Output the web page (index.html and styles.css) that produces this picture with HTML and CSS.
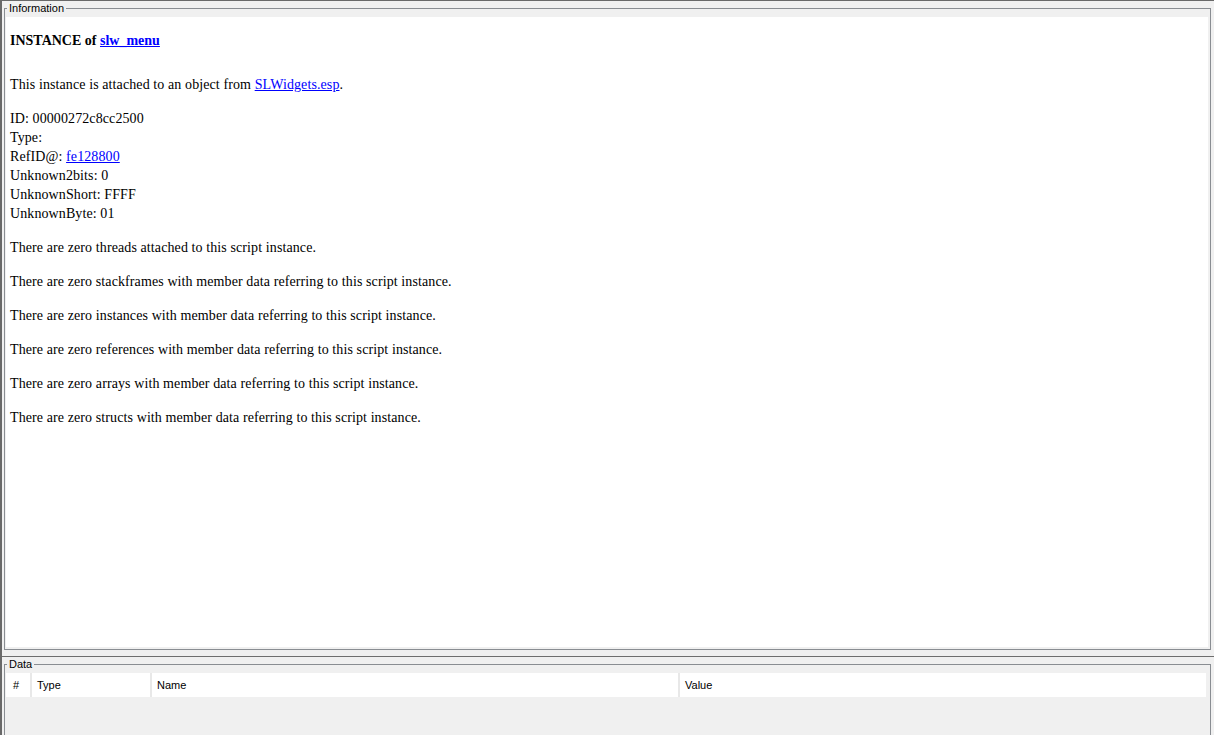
FILE: index.html
```html
<!DOCTYPE html>
<html lang="en">
<head>
    <meta charset="UTF-8">
    <title>Script Instance</title>
    <link rel="stylesheet" href="styles.css">
</head>
<body>
    <div class="top-pane">
        <div class="group info-group">
            <div class="group-title">Information</div>
            <div class="browser">
                <h3 class="heading">INSTANCE of <a href="#">slw_menu</a></h3>
                <p>This instance is attached to an object from <a href="#">SLWidgets.esp</a>.</p>
                <p>
                    ID: 00000272c8cc2500<br>
                    Type: <br>
                    RefID@: <a href="#">fe128800</a><br>
                    Unknown2bits: 0<br>
                    UnknownShort: FFFF<br>
                    UnknownByte: 01
                </p>
                <p>There are zero threads attached to this script instance.</p>
                <p>There are zero stackframes with member data referring to this script instance.</p>
                <p>There are zero instances with member data referring to this script instance.</p>
                <p>There are zero references with member data referring to this script instance.</p>
                <p>There are zero arrays with member data referring to this script instance.</p>
                <p>There are zero structs with member data referring to this script instance.</p>
            </div>
        </div>
    </div>
    <div class="splitter"></div>
    <div class="bottom-pane">
        <div class="group data-group">
            <div class="group-title">Data</div>
            <div class="list-header">
                <div class="col col-num">#</div>
                <div class="col col-type">Type</div>
                <div class="col col-name">Name</div>
                <div class="col col-value">Value</div>
            </div>
        </div>
    </div>
</body>
</html>
```

FILE: styles.css
```css
html, body {
    margin: 0;
    padding: 0;
}
body {
    width: 1212px;
    height: 734px;
    overflow: hidden;
    background-color: #f0f0f0;
    border-left: 2px solid #696969;
    border-top: 1px solid #696969;
    display: flex;
    flex-direction: column;
    font-family: "Liberation Sans", Arial, sans-serif;
    font-size: 11px;
    color: #000;
}
.top-pane {
    height: 655px;
    display: flex;
    flex-direction: column;
}
.splitter {
    height: 1px;
    background-color: #6e6e6e;
}
.bottom-pane {
    flex: 1;
    display: flex;
    flex-direction: column;
}
.group {
    border: 1px solid #898d92;
    display: flex;
    flex-direction: column;
}
.info-group {
    flex: 1;
    margin: 7px 3px 6px 2px;
}
.data-group {
    flex: 1;
    margin: 7px 3px 0 2px;
    border-bottom: none;
}
.group-title {
    align-self: flex-start;
    margin: -7px 0 0 2px;
    padding: 0 2px;
    height: 13px;
    line-height: 13px;
    background-color: #f0f0f0;
}
.browser {
    flex: 1;
    margin: 2px 2px 2px 1px;
    padding: 0 4px;
    background-color: #fff;
    font-family: "Liberation Serif", "Times New Roman", serif;
    font-size: 14px;
    line-height: 19px;
    letter-spacing: 0.1px;
    overflow: hidden;
}
.browser a {
    color: #0000ff;
}
.heading {
    margin: 14px 0 25px 0;
    font-size: 14px;
    letter-spacing: 0;
}
.browser p {
    margin: 15px 0;
}
.list-header {
    display: flex;
    height: 24px;
    margin: 2px 4px 0 1px;
    background-color: #fff;
    line-height: 24px;
}
.col {
    padding-left: 5px;
    border-right: 2px solid #e8e8e8;
    box-sizing: border-box;
}
.col-num {
    width: 26px;
    padding-left: 7px;
}
.col-type {
    width: 120px;
}
.col-name {
    width: 528px;
}
.col-value {
    flex: 1;
    border-right: none;
}
```
